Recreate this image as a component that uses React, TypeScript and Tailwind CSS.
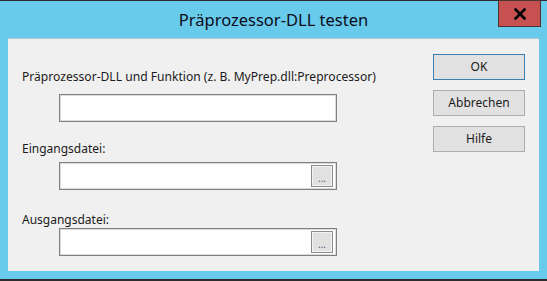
import React from "react";

const font = { fontFamily: '"Noto Sans", "Open Sans", sans-serif' };

function Field({ browse }: { browse?: boolean }) {
  return (
    <div className="ml-[37px] w-[278px] h-[28px] bg-white border border-[#7f7f7f] shadow-[inset_0_0_0_1px_#dcdcdc] flex items-center justify-end pr-[3px]">
      {browse && (
        <div className="w-[22px] h-[22px] bg-[#e1e1e1] border border-[#8c8c8c] shadow-[inset_0_0_0_1px_#f4f4f4] flex items-center justify-center pt-[3px]">
          <span className="text-[10px] leading-[10px] text-[#5a5a7a]">...</span>
        </div>
      )}
    </div>
  );
}

function Btn({ label, def }: { label: string; def?: boolean }) {
  return (
    <div
      className={
        "w-[92px] h-[26px] bg-[#e1e1e1] border flex items-center justify-center text-[12px] text-[#1b1b1b] " +
        (def ? "border-[#3c7fb1]" : "border-[#adadad]")
      }
    >
      {label}
    </div>
  );
}

export default function App() {
  return (
    <div
      className="relative w-[547px] h-[281px] bg-[#69cbeb] border-t border-t-[#2b2b2b] border-b-2 border-b-[#2b2b2b] flex flex-col"
      style={font}
    >
      <div className="h-[37px] flex items-center justify-center text-[16.5px] text-[#0b0b1a] pt-[2px]">
        Präprozessor-DLL testen
      </div>
      <div className="absolute left-[498px] top-[-1px] w-[43px] h-[27px] bg-[#c75050] border border-[#4a3535] flex items-center justify-center">
        <svg width="12" height="12" viewBox="0 0 12 12">
          <path d="M1.5 1.5 L10.5 10.5 M10.5 1.5 L1.5 10.5" stroke="#000" strokeWidth="2.6" strokeLinecap="square" />
        </svg>
      </div>
      <div className="mx-[8px] h-[233px] bg-[#f0f0f0] border-t border-t-[#a9c7d8] flex">
        <div className="flex flex-col pl-[14px] pt-[30px] w-[417px] text-[12px] text-[#1b1b1b]">
          <div className="h-[16px] leading-[16px] whitespace-nowrap text-[12.1px]">
            Präprozessor-DLL und Funktion (z. B. MyPrep.dll:Preprocessor)
          </div>
          <div className="mt-[9px]">
            <Field />
          </div>
          <div className="mt-[19px] h-[16px] leading-[16px]">Eingangsdatei:</div>
          <div className="mt-[5px]">
            <Field browse />
          </div>
          <div className="mt-[22px] h-[16px] leading-[16px]">Ausgangsdatei:</div>
          <div className="mt-0">
            <Field browse />
          </div>
        </div>
        <div className="flex flex-col gap-[10px] pt-[15px] pl-[8px]">
          <Btn label="OK" def />
          <Btn label="Abbrechen" />
          <Btn label="Hilfe" />
        </div>
      </div>
    </div>
  );
}
